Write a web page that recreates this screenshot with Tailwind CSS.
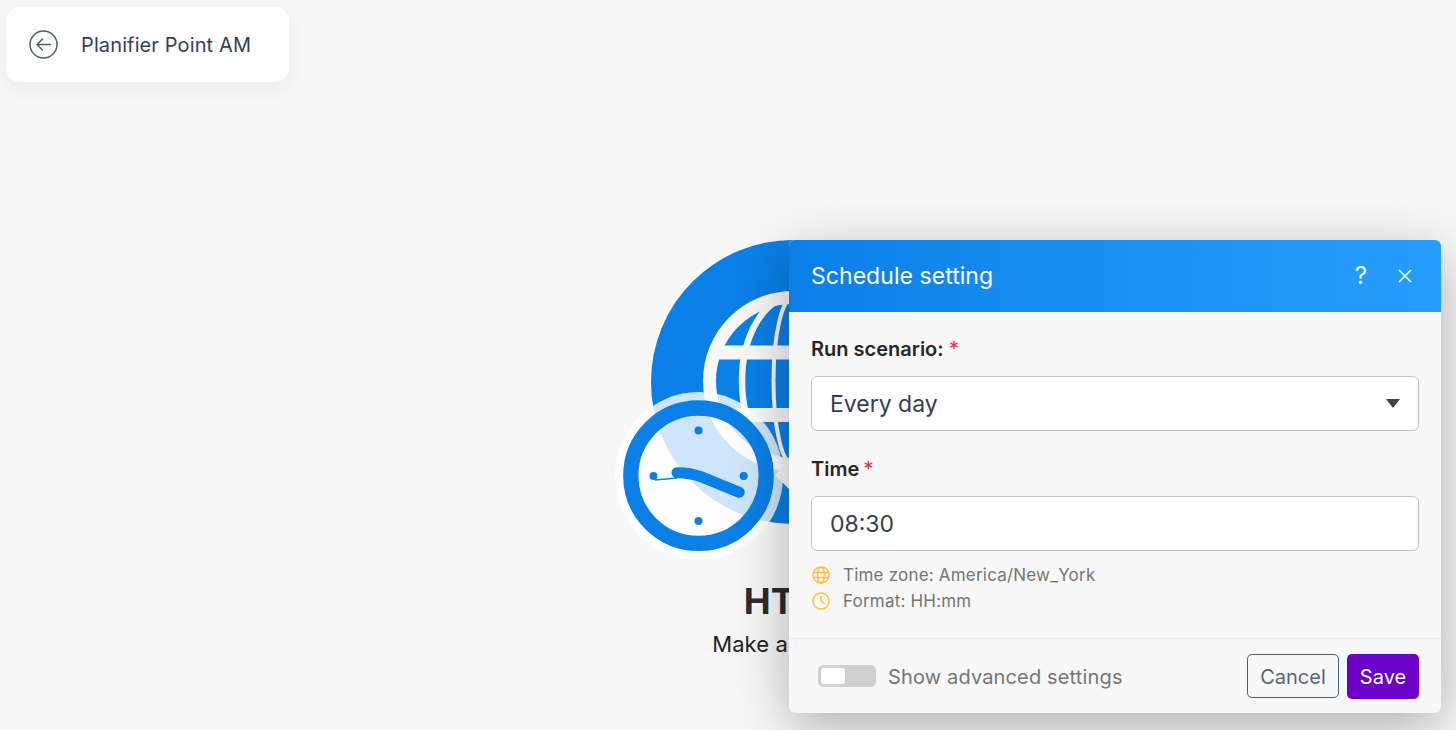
<!DOCTYPE html>
<html lang="en">
<head>
  <meta charset="UTF-8" />
  <meta name="viewport" content="width=device-width, initial-scale=1.0"/>
  <title>Schedule setting</title>
  <script src="https://cdn.jsdelivr.net/npm/@tailwindcss/browser@4"></script>
</head>
<body class="bg-[#f8f8f8] font-['Inter',sans-serif]">
  <div class="relative w-[1456px] h-[730px] overflow-hidden">

    <!-- Scenario title card -->
    <div class="absolute left-[6px] top-[7px] w-[283px] h-[75px] bg-white rounded-[14px] shadow-[0_6px_20px_rgba(0,0,0,0.06)] flex items-center pl-[23px] gap-[23px]">
      <svg class="w-[29px] h-[29px]" viewBox="0 0 29 29" fill="none" stroke="#4a5f78" stroke-width="1.500" stroke-linecap="round" stroke-linejoin="round">
        <circle cx="14.500" cy="14.500" r="13.500"/>
        <path d="M21.500 14.500H8M13.500 9l-5.500 5.500 5.500 5.500"/>
      </svg>
      <span class="text-[20px] text-[#334155] tracking-[0.12px]">Planifier Point AM</span>
    </div>

    <!-- Module node on the canvas -->
    <div class="absolute left-[651px] top-[240px] w-[284px] h-[284px] rounded-full bg-[#0a7fe6]">
      <svg class="absolute left-[52px] top-[51px] w-[180px] h-[180px]" viewBox="0 0 180 180" fill="none" stroke="#f8f8f8">
        <circle cx="90" cy="90" r="83.500" stroke-width="13"/>
        <ellipse cx="90" cy="90" rx="19.500" ry="84" stroke-width="4"/>
        <ellipse cx="90" cy="90" rx="51" ry="84" stroke-width="6.500"/>
        <path d="M10 61.500h160M10 124h160" stroke-width="14"/>
      </svg>
    </div>
    <div class="absolute left-[615px] top-[392px] w-[168px] h-[168px] rounded-full bg-white/80"></div>
    <svg class="absolute left-[615px] top-[392px] w-[168px] h-[168px]" viewBox="0 0 168 168" fill="none">
      <circle cx="83.500" cy="83.700" r="67.700" stroke="#0a7fe6" stroke-width="15.300"/>
      <g fill="#0a7fe6">
        <circle cx="83.500" cy="38.500" r="4"/>
        <circle cx="83.500" cy="129" r="4"/>
        <circle cx="38.500" cy="84" r="4"/>
        <circle cx="128.700" cy="84" r="4"/>
      </g>
      <path d="M62 80.700c9 0 17 1.500 24 4l38.300 15.600" stroke="#0a7fe6" stroke-width="11" stroke-linecap="round"/>
      <path d="M40 88l22-2" stroke="#0a7fe6" stroke-width="1.500"/>
    </svg>
    <div class="absolute left-[793px] top-[579px] -translate-x-1/2 flex flex-col items-center whitespace-nowrap">
      <span class="text-[36px] leading-[44px] font-bold text-[#2b2b2b]">HTTP</span>
      <span class="text-[22px] leading-[28px] mt-[7px] text-[#1f1f1f] tracking-[0.1px]">Make a request</span>
    </div>

    <!-- Dialog pointer -->
    <div class="absolute left-[775px] top-[455px] w-[40px] h-[40px] bg-[#f8f8f8] [clip-path:polygon(50%_0,100%_50%,50%_100%,0_50%)]"></div>

    <!-- Schedule setting dialog -->
    <div class="absolute left-[789px] top-[240px] w-[652px] h-[473px] bg-[#f8f8f8] rounded-[6px] shadow-[0_14px_55px_rgba(0,0,0,0.3)] flex flex-col overflow-hidden">
      <div class="h-[72px] shrink-0 flex items-center pl-[22px] pr-[29px] bg-gradient-to-r from-[#0a7fe6] to-[#259fff] text-white">
        <h2 class="text-[23px] flex-1 tracking-[0.05px]">Schedule setting</h2>
        <span class="text-[24px] w-[16px] text-center mr-[29px]">?</span>
        <svg class="w-[14px] h-[14px]" viewBox="0 0 14 14" fill="none" stroke="white" stroke-width="1.600" stroke-linecap="round">
          <path d="M1.500 1.500l11 11M12.500 1.500l-11 11"/>
        </svg>
      </div>

      <div class="flex-1 px-[22px] pt-[24px]">
        <label class="flex gap-[5px] text-[20px] leading-[26px] font-semibold text-[#262626]">Run scenario: <span class="text-[#e8374f] font-medium">*</span></label>
        <div class="relative mt-[14px]">
          <select class="w-full h-[55px] appearance-none bg-white border border-[#c4c4c4] rounded-[6px] pl-[18px] pt-[2px] text-[23px] text-[#343e4d]">
            <option>Every day</option>
          </select>
          <span class="absolute right-[19px] top-[23px] w-0 h-0 border-x-[7.500px] border-x-transparent border-t-[9px] border-t-[#3f4347]"></span>
        </div>
        <label class="flex gap-[4px] mt-[25px] text-[20px] leading-[26px] font-semibold text-[#262626]">Time <span class="text-[#e8374f] font-medium">*</span></label>
        <input value="08:30" class="block mt-[14px] w-full h-[55px] bg-white border border-[#c4c4c4] rounded-[6px] pl-[18px] text-[23px] text-[#343e4d]" />
        <div class="mt-[11px] flex items-center gap-[12px] h-[26px] text-[#757575] text-[17px] tracking-[0.2px]">
          <svg class="w-[20px] h-[20px]" viewBox="0 0 20 20" fill="none" stroke="#fdbf3f" stroke-width="1.500">
            <circle cx="10" cy="10" r="8"/><ellipse cx="10" cy="10" rx="3.500" ry="8"/><path d="M2.500 7.500h15M2.500 12.500h15"/>
          </svg>
          <span class="pt-[2px]">Time zone: America/New_York</span>
        </div>
        <div class="flex items-center gap-[12px] h-[26px] text-[#757575] text-[17px] tracking-[0.2px]">
          <svg class="w-[20px] h-[20px]" viewBox="0 0 20 20" fill="none" stroke="#fdbf3f" stroke-width="1.500" stroke-linecap="round" stroke-linejoin="round">
            <circle cx="10" cy="10" r="8"/><path d="M10 5.500V10l3 2.500"/>
          </svg>
          <span class="pt-[2px]">Format: HH:mm</span>
        </div>
      </div>

      <div class="h-[75px] shrink-0 border-t border-[#ececec] flex items-center pl-[29px] pr-[22px]">
        <div class="w-[58px] h-[22px] rounded-[5px] bg-[#d1d1d1] p-[3px]">
          <div class="w-[24px] h-[16px] rounded-[3px] bg-white"></div>
        </div>
        <span class="ml-[12px] pt-[2px] flex-1 text-[20px] text-[#757575] tracking-[0.15px]">Show advanced settings</span>
        <button class="w-[92px] h-[44px] pt-[2px] border border-[#4a5f70] rounded-[5px] text-[20px] text-[#55677a]">Cancel</button>
        <button class="ml-[8px] w-[72px] h-[45px] pt-[2px] rounded-[5px] bg-[#6c00c8] text-[20px] text-white">Save</button>
      </div>
    </div>
  </div>
</body>
</html>
